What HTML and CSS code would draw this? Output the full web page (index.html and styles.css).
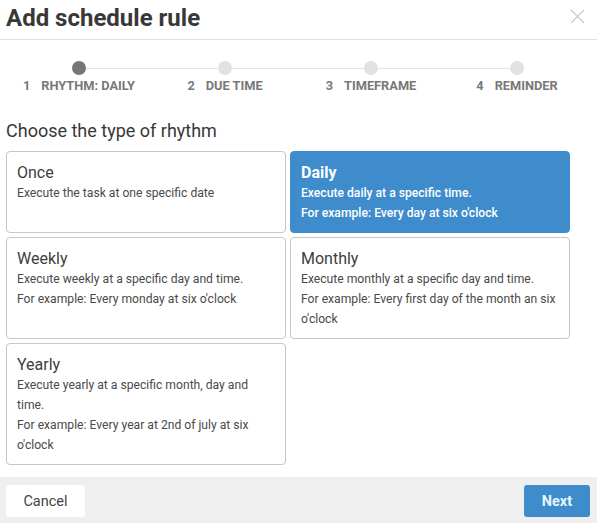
FILE: index.html
```html
<!DOCTYPE html>
<html lang="en">
<head>
<meta charset="utf-8">
<title>Add schedule rule</title>
<link rel="stylesheet" href="styles.css">
</head>
<body>
<div class="dialog">
  <header class="header">
    <h1 class="title">Add schedule rule</h1>
    <button class="close" aria-label="Close">
      <svg width="15" height="15" viewBox="0 0 15 15"><path d="M1 1L14 14M14 1L1 14" stroke="#c9c9c9" stroke-width="1.2" fill="none"/></svg>
    </button>
  </header>
  <main class="content">
    <ol class="stepper">
      <li class="step active"><span class="dot"></span><span class="label"><span class="num">1</span>RHYTHM: DAILY</span></li>
      <li class="step"><span class="dot"></span><span class="label"><span class="num">2</span>DUE TIME</span></li>
      <li class="step"><span class="dot"></span><span class="label"><span class="num">3</span>TIMEFRAME</span></li>
      <li class="step"><span class="dot"></span><span class="label"><span class="num">4</span>REMINDER</span></li>
    </ol>
    <h2 class="subtitle">Choose the type of rhythm</h2>
    <div class="options">
      <div class="card">
        <div class="card-title">Once</div>
        <div class="card-text">Execute the task at one specific date</div>
      </div>
      <div class="card selected">
        <div class="card-title">Daily</div>
        <div class="card-text">Execute daily at a specific time.</div>
        <div class="card-text">For example: Every day at six o'clock</div>
      </div>
      <div class="card">
        <div class="card-title">Weekly</div>
        <div class="card-text">Execute weekly at a specific day and time.</div>
        <div class="card-text">For example: Every monday at six o'clock</div>
      </div>
      <div class="card">
        <div class="card-title">Monthly</div>
        <div class="card-text">Execute monthly at a specific day and time.</div>
        <div class="card-text">For example: Every first day of the month an six o'clock</div>
      </div>
      <div class="card">
        <div class="card-title">Yearly</div>
        <div class="card-text">Execute yearly at a specific month, day and time.</div>
        <div class="card-text">For example: Every year at 2nd of july at six o'clock</div>
      </div>
    </div>
  </main>
  <footer class="footer">
    <button class="btn btn-cancel">Cancel</button>
    <button class="btn btn-next">Next</button>
  </footer>
</div>
</body>
</html>
```

FILE: styles.css
```css
html, body {
  margin: 0;
  padding: 0;
  height: 100%;
  background: #ffffff;
  font-family: Roboto, "Liberation Sans", Arial, sans-serif;
  color: #444;
}

.dialog {
  display: flex;
  flex-direction: column;
  height: 100vh;
}

.header {
  display: flex;
  justify-content: space-between;
  align-items: flex-start;
  padding: 4px 12px 7px 6px;
  border-bottom: 1px solid #e2e2e2;
}

.title {
  margin: 0;
  font-size: 24px;
  line-height: 28px;
  font-weight: 700;
  color: #383838;
}

.close {
  background: none;
  border: 0;
  padding: 0;
  margin-top: 5px;
  width: 15px;
  height: 15px;
  display: block;
  cursor: pointer;
}

.close svg {
  display: block;
}

.content {
  flex: 1;
  padding: 0 6px;
}

.stepper {
  position: relative;
  list-style: none;
  margin: 21px 0 0;
  padding: 0;
  width: 584px;
  display: grid;
  grid-template-columns: repeat(4, 1fr);
}

.stepper::before {
  content: "";
  position: absolute;
  left: 73px;
  right: 73px;
  top: 7px;
  height: 1px;
  background: #e3e3e3;
}

.step {
  display: flex;
  flex-direction: column;
  align-items: center;
  position: relative;
}

.dot {
  width: 14px;
  height: 14px;
  border-radius: 50%;
  background: #e2e2e2;
}

.step.active .dot {
  background: #777777;
}

.label {
  margin-top: 3px;
  font-size: 12.8px;
  line-height: 16px;
  font-weight: 700;
  color: #787878;
  white-space: nowrap;
}

.num {
  margin-right: 11px;
}

.subtitle {
  margin: 25px 0 8px;
  font-size: 18px;
  line-height: 24px;
  font-weight: 400;
  color: #383838;
}

.options {
  display: grid;
  grid-template-columns: 280px 280px;
  gap: 4px;
}

.card {
  border: 1px solid #c6c6c6;
  border-radius: 4px;
  padding: 11px 8px 9px 10px;
  background: #fff;
}

.card-title {
  font-size: 16px;
  line-height: 20px;
  color: #3e3e3e;
}

.card-text {
  font-size: 12.15px;
  line-height: 20px;
  color: #4a4a4a;
}

.card.selected {
  background: #3e8ccb;
  border-color: #3e8ccb;
}

.card.selected .card-title {
  color: #fff;
  font-weight: 700;
}

.card.selected .card-text {
  color: #fff;
  font-weight: 500;
}

.footer {
  display: flex;
  justify-content: space-between;
  align-items: flex-start;
  box-sizing: border-box;
  height: 46px;
  padding: 8px 7px 0 6px;
  background: #efefef;
}

.btn {
  height: 32px;
  border: 0;
  border-radius: 3px;
  font-family: Roboto, "Liberation Sans", Arial, sans-serif;
  font-size: 14.5px;
  padding-top: 2px;
  cursor: pointer;
}

.btn-cancel {
  width: 79px;
  background: #fff;
  color: #444;
}

.btn-next {
  width: 66px;
  background: #3e8ccb;
  color: #e6f6ff;
  font-weight: 700;
}
```
